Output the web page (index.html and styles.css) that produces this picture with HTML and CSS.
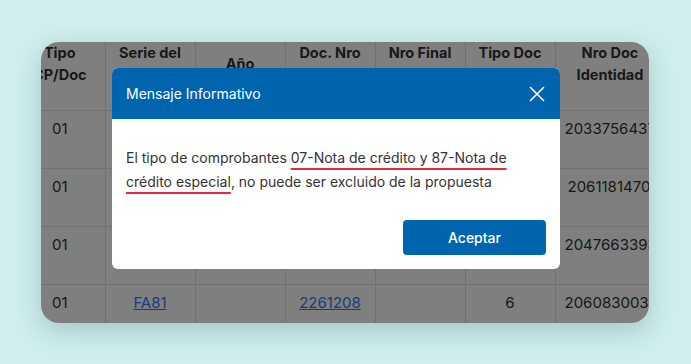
FILE: index.html
```html
<!DOCTYPE html>
<html lang="es">

<head>
    <meta charset="UTF-8">
    <meta name="viewport" content="width=device-width, initial-scale=1.0">
    <title>Propuesta</title>
    <link rel="stylesheet" href="styles.css">
</head>

<body>

    <div class="card">
        <div class="scroll">
            <table class="grid">
                <colgroup>
                    <col class="c">
                    <col class="c">
                    <col class="c">
                    <col class="c">
                    <col class="c">
                    <col class="c">
                    <col class="c-last">
                </colgroup>
                <thead>
                    <tr>
                        <th>Tipo<br>CP/Doc</th>
                        <th>Serie del<br>CDP</th>
                        <th>Año</th>
                        <th>Doc. Nro<br>Inicial</th>
                        <th>Nro Final<br>(Rango)</th>
                        <th>Tipo Doc<br>Identidad</th>
                        <th>Nro Doc<br>Identidad</th>
                    </tr>
                </thead>
                <tbody>
                    <tr>
                        <td>01</td>
                        <td><a href="#">FA12</a></td>
                        <td></td>
                        <td><a href="#">2261180</a></td>
                        <td></td>
                        <td>6</td>
                        <td class="num">2033756437</td>
                    </tr>
                    <tr>
                        <td>01</td>
                        <td><a href="#">FA33</a></td>
                        <td></td>
                        <td><a href="#">2261191</a></td>
                        <td></td>
                        <td>6</td>
                        <td class="num num2">20611814705</td>
                    </tr>
                    <tr>
                        <td>01</td>
                        <td><a href="#">FA47</a></td>
                        <td></td>
                        <td><a href="#">2261199</a></td>
                        <td></td>
                        <td>6</td>
                        <td class="num">2047663393</td>
                    </tr>
                    <tr>
                        <td>01</td>
                        <td><a href="#">FA81</a></td>
                        <td></td>
                        <td><a href="#">2261208</a></td>
                        <td></td>
                        <td>6</td>
                        <td class="num">2060830039</td>
                    </tr>
                </tbody>
            </table>
        </div>

        <div class="backdrop"></div>

        <div class="modal">
            <div class="modal-head">
                <span class="modal-title">Mensaje Informativo</span>
                <svg class="close" width="16" height="16" viewBox="0 0 16 16">
                    <path d="M1.5 1.5 L14.5 14.5 M14.5 1.5 L1.5 14.5" stroke="#fff" stroke-width="1.6" stroke-linecap="round" fill="none" />
                </svg>
            </div>
            <div class="modal-body">
                <p class="msg">El tipo de comprobantes <span class="mark">07-Nota de crédito y 87-Nota de crédito especial</span>, no puede ser excluido de la propuesta</p>
                <div class="actions">
                    <button class="btn">Aceptar</button>
                </div>
            </div>
        </div>
    </div>

</body>

</html>
```

FILE: styles.css
```css
body {
    margin: 0;
    background-color: #cfeeec;
    font-family: Inter, "Liberation Sans", sans-serif;
    width: 691px;
    height: 364px;
    overflow: hidden;
}

.card {
    position: relative;
    margin: 42px 0 0 41px;
    width: 608px;
    height: 281px;
    border-radius: 18px;
    overflow: hidden;
    background-color: #fff;
    box-shadow: 0 8px 24px rgba(40, 90, 90, 0.25);
}

.scroll {
    margin-left: -26px;
}

.grid {
    border-collapse: collapse;
    table-layout: fixed;
    width: 650px;
    color: #333;
    font-size: 15px;
}

.c {
    width: 90px;
}

.c-last {
    width: 110px;
}

.grid th {
    height: 64px;
    box-sizing: border-box;
    padding: 0 4px 24px;
    font-size: 14.5px;
    font-weight: bold;
    line-height: 22px;
    text-align: center;
    vertical-align: middle;
    border-right: 1px solid #e2e2e2;
    border-bottom: 1px solid #e2e2e2;
}

.grid td {
    height: 58px;
    box-sizing: border-box;
    padding: 8px 4px 0;
    line-height: 20px;
    text-align: center;
    vertical-align: top;
    border-right: 1px solid #e2e2e2;
    border-bottom: 1px solid #e2e2e2;
}

.grid td.num {
    text-align: left;
    padding-left: 9px;
    white-space: nowrap;
}

.grid td.num2 {
    padding-left: 12px;
}

.grid a {
    color: #2f7bff;
}

.backdrop {
    position: absolute;
    inset: 0;
    background-color: rgba(0, 0, 0, 0.5);
}

.modal {
    position: absolute;
    left: 71px;
    top: 26px;
    width: 448px;
    background-color: #fff;
    border-radius: 6px;
    overflow: hidden;
}

.modal-head {
    height: 51px;
    background-color: #0064ae;
    display: flex;
    align-items: center;
    justify-content: space-between;
    padding: 0 14px;
}

.modal-title {
    color: #fff;
    font-size: 14px;
}

.close {
    margin-right: 1px;
}

.modal-body {
    padding: 27px 14px 14px;
}

.msg {
    margin: 0;
    font-size: 14px;
    line-height: 24px;
    color: #333;
}

.mark {
    text-decoration: underline;
    text-decoration-color: #e8283c;
    text-decoration-thickness: 2px;
    text-underline-offset: 5px;
}

.actions {
    display: flex;
    justify-content: flex-end;
    margin-top: 26px;
}

.btn {
    width: 143px;
    height: 35px;
    border: none;
    border-radius: 4px;
    background-color: #0064ae;
    color: #fff;
    font-family: Inter, "Liberation Sans", sans-serif;
    font-size: 14px;
    font-weight: 500;
}
```
